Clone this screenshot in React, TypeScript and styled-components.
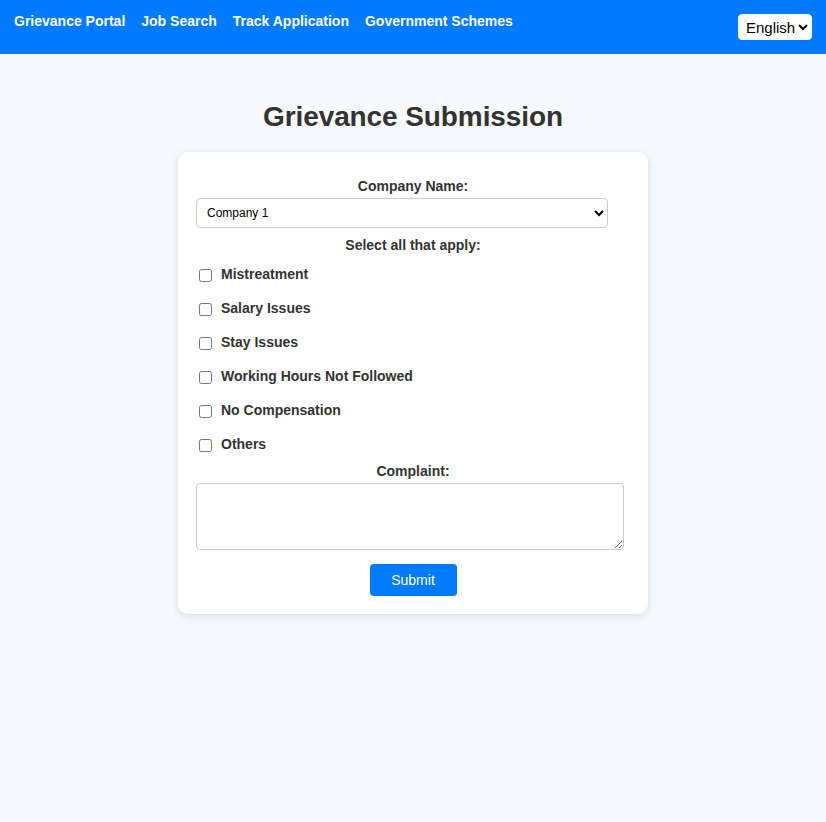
import React from "react";
import styled, { createGlobalStyle } from "styled-components";

const Global = createGlobalStyle`
  html, body { margin: 0; padding: 0; }
  body {
    background: #f8f9fa;
    font-family: "Liberation Sans", Arial, sans-serif;
    color: #333;
    min-height: 822px;
  }
`;

const NavBar = styled.nav`
  height: 54px;
  box-sizing: border-box;
  background: #007bff;
  display: flex;
  justify-content: space-between;
  align-items: flex-start;
  padding: 12px 14px 0 14px;
`;

const NavLinks = styled.div`
  display: flex;
  gap: 16px;
`;

const NavLink = styled.a`
  color: #fff;
  font-weight: bold;
  font-size: 14px;
  line-height: 18px;
  text-decoration: none;
`;

const LangSelect = styled.select`
  margin-top: 2px;
  width: 74px;
  height: 26px;
  font-family: "Liberation Sans", Arial, sans-serif;
  font-size: 15px;
  border-radius: 4px;
  border: 1px solid #fff;
  background: #fff;
  color: #000;
  padding: 0 0 0 3px;
`;

const Main = styled.main`
  display: flex;
  flex-direction: column;
  align-items: center;
  padding-top: 45px;
`;

const Title = styled.h1`
  margin: 0 0 17px 0;
  font-size: 28px;
  line-height: 36px;
  font-weight: bold;
  color: #333;
  letter-spacing: -0.1px;
`;

const Card = styled.form`
  width: 470px;
  box-sizing: border-box;
  background: #fff;
  border-radius: 10px;
  box-shadow: 0 2px 8px rgba(0, 0, 0, 0.12);
  padding: 26px 18px 18px 18px;
  display: flex;
  flex-direction: column;
`;

const FieldLabel = styled.label`
  display: block;
  text-align: center;
  font-weight: bold;
  font-size: 14px;
  line-height: 16px;
  margin-bottom: 4px;
`;

const CompanySelect = styled.select`
  width: 412px;
  height: 30px;
  box-sizing: border-box;
  border: 1px solid #ccc;
  border-radius: 4px;
  padding: 0 6px;
  font-family: "Liberation Sans", Arial, sans-serif;
  font-size: 12px;
  color: #000;
  background: #fff;
  margin-bottom: 9px;
`;

const CheckList = styled.div`
  display: flex;
  flex-direction: column;
  margin-bottom: 2px;
`;

const CheckRow = styled.label`
  display: flex;
  align-items: center;
  height: 34px;
  font-weight: bold;
  font-size: 14px;
  padding-left: 3px;
`;

const Box = styled.input`
  width: 13px;
  height: 13px;
  margin: 3px 9px 0 0;
`;

const Complaint = styled.textarea`
  width: 428px;
  height: 67px;
  box-sizing: border-box;
  border: 1px solid #ccc;
  border-radius: 4px;
  margin: 0 0 14px 0;
  font-family: "Liberation Sans", Arial, sans-serif;
`;

const SubmitButton = styled.button`
  align-self: center;
  width: 87px;
  height: 32px;
  background: #007bff;
  color: #fff;
  border: none;
  border-radius: 4px;
  font-family: "Liberation Sans", Arial, sans-serif;
  font-size: 14px;
`;

const issues = [
  "Mistreatment",
  "Salary Issues",
  "Stay Issues",
  "Working Hours Not Followed",
  "No Compensation",
  "Others",
];

export default function App() {
  return (
    <>
      <Global />
      <NavBar>
        <NavLinks>
          <NavLink href="#">Grievance Portal</NavLink>
          <NavLink href="#">Job Search</NavLink>
          <NavLink href="#">Track Application</NavLink>
          <NavLink href="#">Government Schemes</NavLink>
        </NavLinks>
        <LangSelect defaultValue="en">
          <option value="en">English</option>
          <option value="hi">Hindi</option>
        </LangSelect>
      </NavBar>
      <Main>
        <Title>Grievance Submission</Title>
        <Card onSubmit={(e) => e.preventDefault()}>
          <FieldLabel>Company Name:</FieldLabel>
          <CompanySelect defaultValue="1">
            <option value="1">Company 1</option>
            <option value="2">Company 2</option>
          </CompanySelect>
          <FieldLabel>Select all that apply:</FieldLabel>
          <CheckList>
            {issues.map((i) => (
              <CheckRow key={i}>
                <Box type="checkbox" />
                {i}
              </CheckRow>
            ))}
          </CheckList>
          <FieldLabel>Complaint:</FieldLabel>
          <Complaint />
          <SubmitButton type="submit">Submit</SubmitButton>
        </Card>
      </Main>
    </>
  );
}
